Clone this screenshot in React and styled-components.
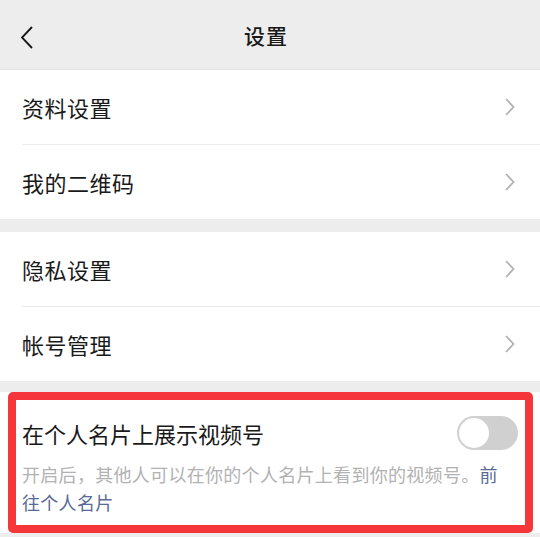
import styled, { createGlobalStyle } from "styled-components"

const GlobalStyle = createGlobalStyle`
    html, body {
        margin: 0;
        padding: 0;
        background: #ededed;
        font-family: "Noto Sans CJK SC", "Noto Sans", sans-serif;
        color: #191919;
    }
`

const Page = styled.div`
    width: 540px;
    height: 537px;
    overflow: hidden;
    background: #ededed;
`

const Header = styled.header`
    height: 69px;
    border-bottom: 1px solid #e2e2e2;
    display: flex;
    align-items: center;
    justify-content: center;
    position: relative;
`

const BackButton = styled.button`
    position: absolute;
    left: 21px;
    top: 26px;
    padding: 0;
    border: 0;
    background: none;
    display: flex;
`

const Title = styled.h1`
    margin: 0 8px 0 0;
    font-size: 21px;
    font-weight: 500;
    letter-spacing: 1px;
`

const Group = styled.section`
    background: #fff;
    margin-bottom: ${(p) => p.gap || 0}px;
`

const Row = styled.div`
    height: 74px;
    display: flex;
    align-items: center;
    justify-content: space-between;
    padding: 0 25px 0 22px;
    font-size: 22px;
    letter-spacing: 0.5px;

    & + & {
        border-top: 1px solid #ececec;
        margin-left: 22px;
        padding-left: 0;
    }
`

const Highlight = styled.div`
    margin: 0 7px 0 8px;
    border: 8px solid #f5363b;
    border-radius: 5px;
    padding: 16px 7px 9px 6px;
`

const SwitchRow = styled.div`
    display: flex;
    align-items: center;
    justify-content: space-between;
    height: 34px;
    font-size: 22px;
`

const Toggle = styled.div`
    width: 61px;
    height: 34px;
    border-radius: 17px;
    background: #d0d0d0;
    position: relative;

    &::after {
        content: "";
        position: absolute;
        left: 2px;
        top: 2px;
        width: 30px;
        height: 30px;
        border-radius: 50%;
        background: #fff;
    }
`

const Desc = styled.p`
    margin: 10px 0 0;
    max-width: 480px;
    font-size: 18px;
    line-height: 28px;
    letter-spacing: 0.3px;
    color: #b2b2b2;
`

const Link = styled.span`
    color: #576b95;
`

const Chevron = () => (
    <svg width="10" height="18" viewBox="0 0 10 18">
        <polyline points="1,1 8.5,9 1,17" fill="none" stroke="#b2b2b2" strokeWidth="1.8" />
    </svg>
)

const App = () => {
    return (
        <>
            <GlobalStyle />
            <Page>
                <Header>
                    <BackButton>
                        <svg width="12" height="23" viewBox="0 0 12 23">
                            <polyline points="11,1 1,11.5 11,22" fill="none" stroke="#1a1a1a" strokeWidth="1.9" />
                        </svg>
                    </BackButton>
                    <Title>设置</Title>
                </Header>
                <Group gap={13}>
                    <Row>资料设置<Chevron /></Row>
                    <Row>我的二维码<Chevron /></Row>
                </Group>
                <Group gap={11}>
                    <Row>隐私设置<Chevron /></Row>
                    <Row>帐号管理<Chevron /></Row>
                </Group>
                <Group>
                    <Highlight>
                        <SwitchRow>
                            在个人名片上展示视频号
                            <Toggle />
                        </SwitchRow>
                        <Desc>
                            开启后，其他人可以在你的个人名片上看到你的视频号。<Link>前</Link><Link>往个人名片</Link>
                        </Desc>
                    </Highlight>
                </Group>
            </Page>
        </>
    )
}

export default App
